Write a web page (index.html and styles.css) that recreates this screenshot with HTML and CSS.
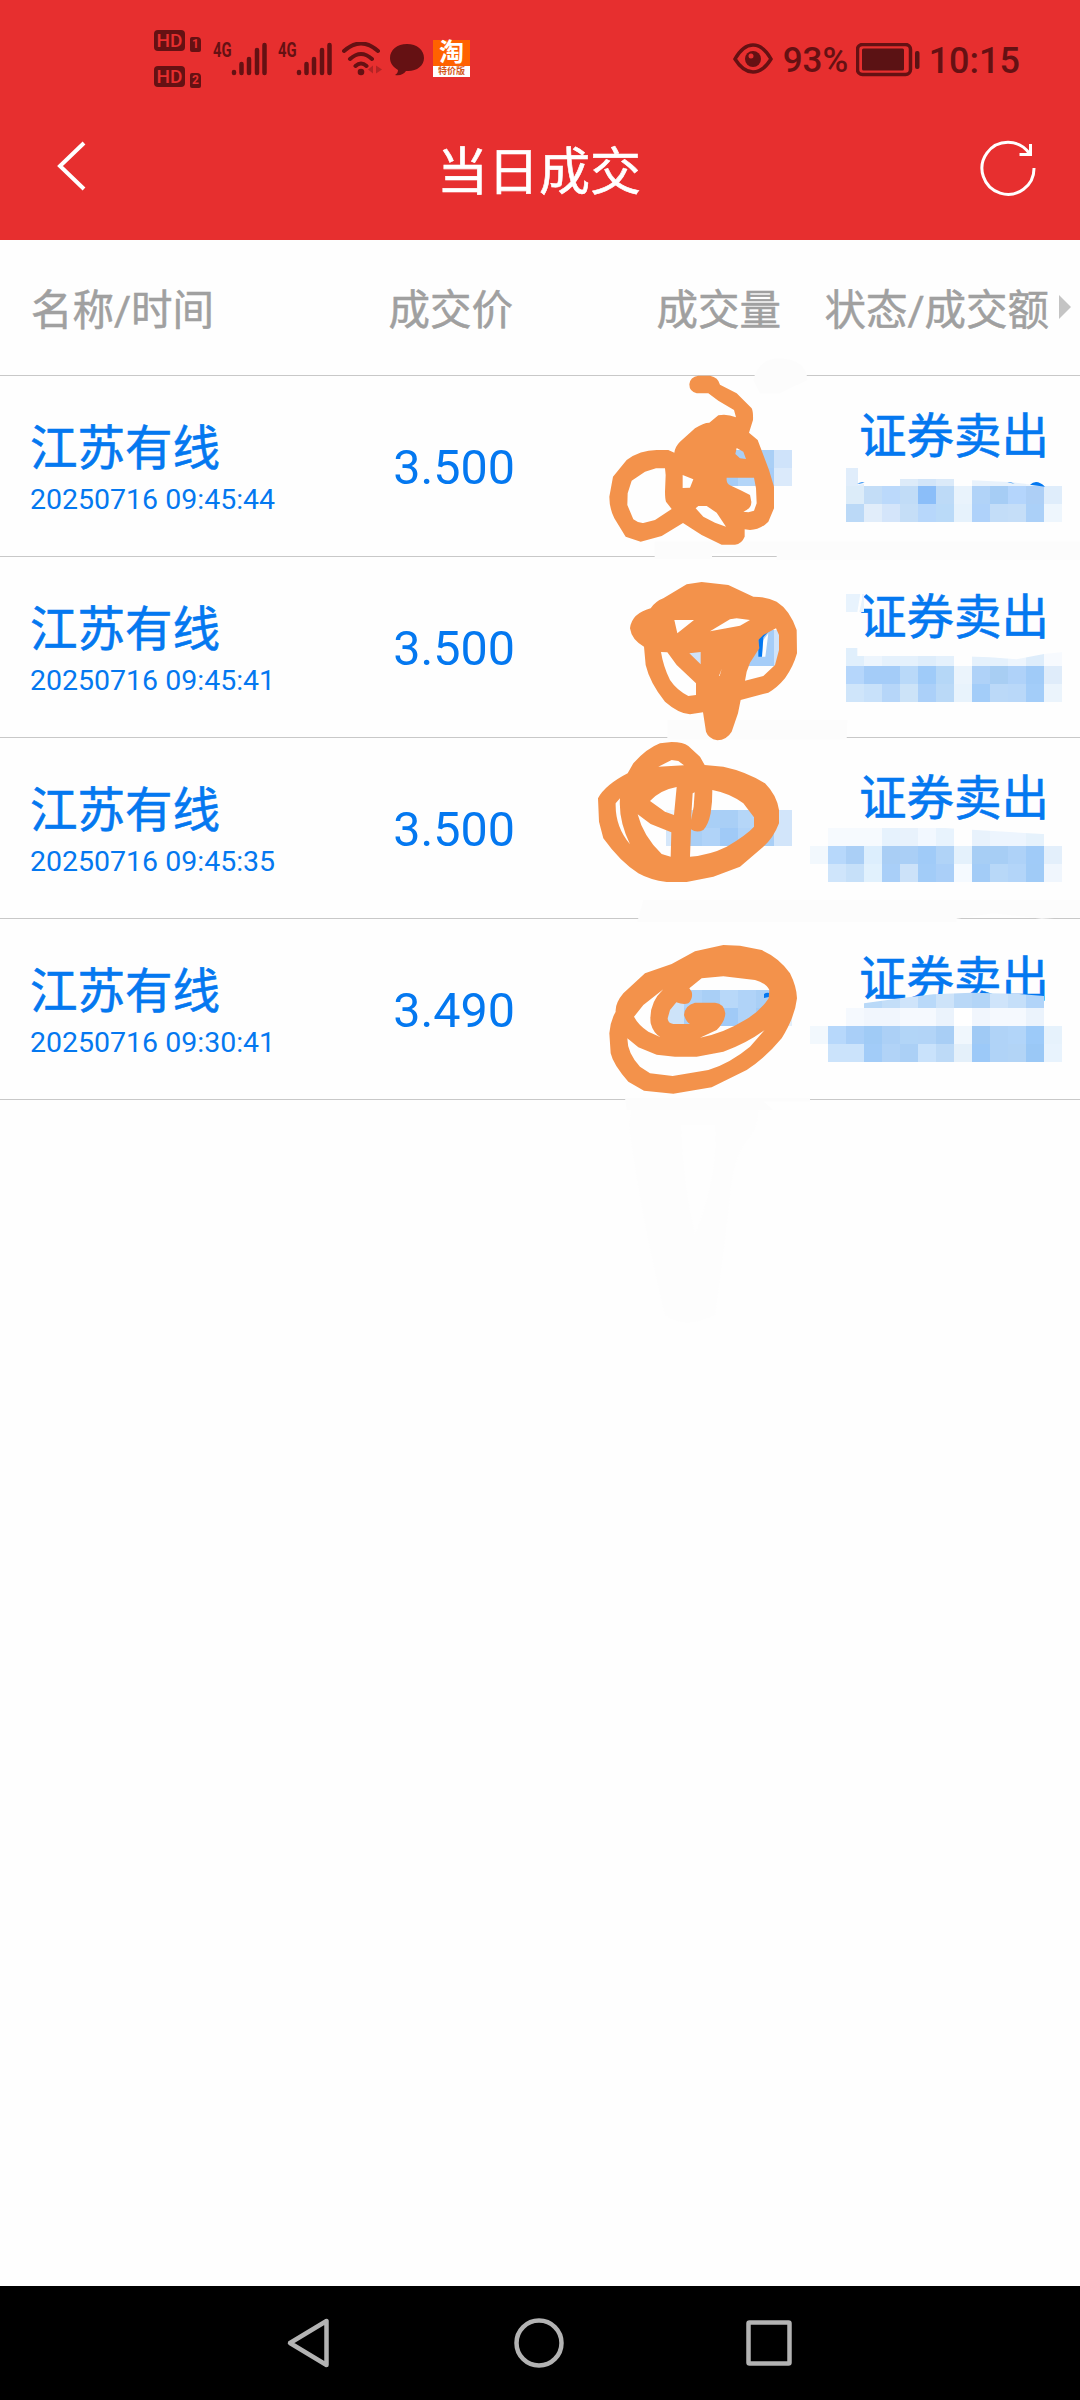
FILE: index.html
```html
<!DOCTYPE html>
<html lang="zh-CN">
<head>
    <meta charset="UTF-8">
    <meta name="viewport" content="width=device-width, initial-scale=1.0">
    <title>当日成交</title>
    <link rel="stylesheet" href="styles.css">
</head>
<body>
    <div class="phone">
        <div class="status-bar">
            <div class="status-left">
                <div class="hd-icons">
                    <div class="hd-line"><span class="hd">HD</span><span class="sim">1</span></div>
                    <div class="hd-line"><span class="hd">HD</span><span class="sim">2</span></div>
                </div>
                <div class="signal">
                    <span class="net">4G</span>
                    <svg width="36" height="34" viewBox="0 0 36 34"><path d="M3 31v-1M10.500 31v-9M18 31V17M26 31V8M33.500 31V3"/></svg>
                </div>
                <div class="signal">
                    <span class="net">4G</span>
                    <svg width="36" height="34" viewBox="0 0 36 34"><path d="M3 31v-1M10.500 31v-9M18 31V17M26 31V8M33.500 31V3"/></svg>
                </div>
                <svg class="wifi" width="40" height="34" viewBox="0 0 40 34">
                    <path d="M2 9q17-15 34 0M8 17q11-10 22 0M13.500 24q5.500-5 11 0"/>
                    <circle cx="19" cy="30" r="3.300"/>
                    <path class="wifi-data" d="M26 27.500l5-4v8zM40 27.500l-6-4v8z"/>
                </svg>
                <svg class="chat" width="34" height="32" viewBox="0 0 34 32">
                    <path d="M17 0C7 0 0 6 0 14c0 5 3 9 8 12 0 2-1 4-3 5 5 1 9-1 11-4 10 1 18-5 18-13S27 0 17 0z"/>
                </svg>
                <div class="taobao">
                    <span class="tao">淘</span>
                    <span class="tejia">特价版</span>
                </div>
            </div>
            <div class="status-right">
                <svg class="eye" width="40" height="32" viewBox="0 0 40 32">
                    <path d="M2 16Q10 2 20 2t18 14q-8 13-18 13T2 16z"/>
                    <circle cx="20" cy="16" r="8"/>
                    <circle class="eye-dot" cx="18" cy="13" r="2.500"/>
                </svg>
                <span class="percent">93%</span>
                <svg class="battery" width="64" height="34" viewBox="0 0 64 34">
                    <rect class="shell" x="1.500" y="1.500" width="53" height="30" rx="5"/>
                    <rect x="6" y="5.500" width="42" height="22" rx="1.500"/>
                    <rect x="59" y="8" width="4.500" height="18" rx="2"/>
                </svg>
                <span class="clock">10:15</span>
            </div>
        </div>

        <div class="title-bar">
            <svg class="back" width="30" height="50" viewBox="0 0 30 50"><path d="M27 2L3 25l24 23"/></svg>
            <h1>当日成交</h1>
            <svg class="refresh" width="56" height="56" viewBox="0 0 56 56">
                <path d="M54 28A26 26 0 1 1 49 13"/>
                <path d="M50.500 4v10.500H39.500"/>
            </svg>
        </div>

        <div class="table-head">
            <span>名称/时间</span>
            <span class="num">成交价</span>
            <span class="num">成交量</span>
            <span class="num">状态/成交额</span>
            <i class="more"></i>
        </div>
        <div class="trade-list" id="trade-list"></div>
        <svg class="smudge" width="140" height="230" viewBox="0 0 140 230">
            <path d="M8 0h122q8 15-4 35-15 15-20 50-5 50-16 130-30 15-50 0Q15 110 4 25z"/>
            <path class="gap" d="M56 25h34q4 50-20 110-12-50-14-110z"/>
        </svg>

        <div class="nav-bar">
            <svg width="46" height="60" viewBox="0 0 46 60"><path d="M40.500 8v44L4 30z"/></svg>
            <svg width="52" height="60" viewBox="0 0 52 60"><circle cx="26" cy="30" r="22.500"/></svg>
            <svg width="46" height="60" viewBox="0 0 46 60"><rect x="2.500" y="9.500" width="41" height="41" rx="1"/></svg>
        </div>
    </div>

    <script>
        // mosaic: [x, y, colours...] rows of 54-unit tiles, "-" leaves a tile out
        // the drawing area of a row uses 3 units per pixel
        const trades = [
            {
                name: '江苏有线', time: '20250716 09:45:44', price: '3.500', side: '证券卖出', top: 48,
                wipe: 'M520 60Q535-5 600-5 680 0 682 60L600 100H540zM224 545H1500V600H590V580H396V596H224z',
                mosaic: [
                    [420, 270, '#a9cff6', '#a9cff6', '#a9cff6', '#cfe3fa'],
                    [420, 324, '#a5ccf6', '#b3d5f8', '#a6cdf8', '#dbeafb'],
                    [798, 324, '#e0edfb', '-', '-', '#ddebf9', '#d2e5f9', '#dbeaf9', '-', '#e8f2fc', '#e8f2fc', '#e8f2fc', '#edf5fd'],
                    [798, 378, '#dcecf9', '#c3ddf7', '#bbd9fb', '#c1dcf7', '#8bbef9', '#bddaf7', '#e9f3fc', '#b1d3f8', '#a6cdf5', '#b4d5fc', '#adcff6', '#dfedfb'],
                    [798, 432, '#bbd9f7', '#e1edfa', '#d4e5fa', '#c5def7', '#b7d7fb', '#badaf8', '#e6f2fc', '#afd2fa', '#c3ddf8', '#c5def8', '#abd0f8', '#eef6fd']
                ],
                cover: 'M834 320H1443V378H1392L1300 367 1176 361 1122 357H960L834 374z',
                rest: 'M832 372q10-8 22-4zM1282 367q12-2 22 4zM1350 374q20-18 45 6z',
                doodle: 'M355 47L390 47Q415 52 420 74L470 100 515 145Q520 155 519 180L507 218 533 240 550 285 567 330 582 380V445L565 485Q540 510 510 510L494 508V530Q485 552 465 554H425L365 525 309 489 245 528 182 545 137 530 103 475Q88 445 88 410L99 350 140 300Q180 270 230 270H265L283 278Q285 260 300 245L345 205Q370 188 388 188L415 166Q440 160 468 172L462 150 415 122 385 100H350Q328 95 328 73 330 50 355 47zM255 325H228L195 335 155 362 143 400 142 435 160 478Q175 490 190 489L225 480 275 447 258 425Q255 415 255 395L257 345zM308 345L340 358 330 383 308 384zM347 445L355 438H380L410 458 438 500 405 488 370 470zM470 264L490 275 498 297 480 295 466 282zM440 353H522L528 385 530 430 522 452 505 457 490 455Q515 445 514 425L510 405 485 392 450 376Q438 370 440 353z'
            },
            {
                name: '江苏有线', time: '20250716 09:45:41', price: '3.500', side: '证券卖出', top: 21,
                wipe: 'M262 510H802L800 568H262z',
                mosaic: [
                    [312, 294, '#cfe3fa'],
                    [528, 240, '#a5cdf8', '#cfe3fa'],
                    [474, 294, '#a5cdf8', '#a5cdf8', '#cfe3fa'],
                    [798, 132, '#e8f3fd'],
                    [798, 294, '#e0effc', '#edf5fd', '#e5f1fc', '#e5f1fc', '#deedfb', '#e5f1fc', '-', '#e5f1fc', '#e5f1fc', '#edf5fd', '#deedfb', '#f7fafe'],
                    [798, 348, '#b5d6fb', '#a4ccf8', '#a4ccf8', '#b9d9f9', '#9fcbf9', '#b5d7f7', '#ebf4fc', '#afd2f8', '#a8cef3', '#afd2f9', '#a0cbf8', '#dfecfa'],
                    [798, 402, '#cfe5fa', '#c8e1fa', '#b6d6f9', '#cce3f8', '#abd0f9', '#bad9f7', '#e8f3fc', '#a3cdf9', '#bbd9f8', '#b9d8f9', '#a3cdf9', '#ebf4fc']
                ],
                cover: 'M832 290H1450V306L1392 312 1310 328 1230 322 1122 318H832zM841 132L832 186H838L846 150V130zM545 320L550 270 565 250 556 320z',
                rest: 'M535 320V262L547 250 566 244 550 262 546 320z',
                doodle: 'M365 96L445 105 520 140Q560 140 590 155 630 180 650 240L651 310Q640 350 615 385 590 415 565 428L482 450 474 490 455 545Q440 570 412 571 385 565 378 545L369 487 330 493Q295 490 255 455 210 400 197 345L192 290Q155 270 150 235 155 190 212 175 225 155 250 145L320 103zM283 210H342L292 250zM390 244L450 208 470 205 510 210 480 227zM243 306L262 307 290 345 348 400V435L325 438Q290 420 270 390 250 350 243 306zM328 310L362 306V343zM588 235L597 255V300L585 345 550 378 495 392 500 365 510 338 538 295 535 270 550 255zM417 378L425 356 419 378z'
            },
            {
                name: '江苏有线', time: '20250716 09:45:35', price: '3.500', side: '证券卖出', top: 24,
                wipe: 'M190 510H1500V562H1460L1385 566 1240 550 1130 566V575H172z',
                mosaic: [
                    [258, 240, '#edf5fd', '#c5dff9', '#a9cff6', '#a9cff6', '#b5d6f8', '#a9cff6', '#d2e5fa'],
                    [258, 294, '#d5e7fa', '#a9cff6', '#b0d3f8', '#a0caf7', '#b0d3f8', '#a9cff6', '#d2e5fa'],
                    [744, 294, '#f6fafe', '#f6fafe', '#f6fafe', '#e6f2fd', '#e8f2fc', '#f2f8ff', '#e8f3fd', '-', '#e8f2fc', '#edf5fe', '#edf5fe', '#e6f2fc'],
                    [690, 348, '#f2f8fd', '#b7d8fb', '#aacff6', '#dceefd', '#a9cef5', '#aacff6', '#a0cbf8', '#b0d3f7', '#e4f1fc', '#a7cef5', '#a7cef5', '#aed2f8', '#a0cbf8', '#e3effb'],
                    [744, 402, '#cfe5fb', '#c6e0f9', '#e1f1fd', '#a9cff8', '#cce2f9', '#a2ccf8', '#aacff8', '#f5faff', '#a3ccf7', '#b8d8f8', '#b3d5f9', '#a0cbf7', '#f0f6fd']
                ],
                cover: 'M1060 292L1400 292V313L1176 299z',
                rest: '',
                doodle: 'M275 36Q310 36 325 48L360 80 374 105 430 110Q500 125 555 160 590 195 597 240V280Q580 325 550 350L480 410 400 440 320 456H260Q210 450 175 430 120 395 70 325L57 275 54 205Q75 165 143 130L160 100Q200 55 240 40zM235 110L275 90 295 93 312 106zM290 171L282 255 255 245 210 213Q240 180 290 171zM344 187L341 230 333 270 338 190zM397 180Q450 190 490 220L522 262V290Q500 315 440 350 390 375 330 380L333 298Q350 310 370 300 385 285 392 250L396 215zM173 253L212 282 274 307 272 380 245 372Q190 320 173 253zM120 205Q115 270 150 343 105 290 107 220z'
            },
            {
                name: '江苏有线', time: '20250716 09:30:41', price: '3.490', side: '证券卖出', top: 27,
                wipe: 'M135 564H690V574H550L580 600H140z',
                mosaic: [
                    [258, 240, '#cde3f9', '#b0d3f8', '#a9cff6', '#b8d8f9', '#b0d3f8', '#a9cff6', '#ffffff'],
                    [258, 294, '#cde3f9', '#a9cff6', '#a9cff6', '#a0caf7', '#b0d3f8', '#9fcaf7', '#e3effb'],
                    [852, 240, '#b9d9f8', '#c3def8', '#cfe4fa', '#b9d9f9', '#cde3f9', '#b9d8f7', '#b3d5f7', '#cfe4fa', '#c5dff9', '#b1d4f9'],
                    [798, 294, '#f5f9fe', '#f1f6fd', '#f1f6fd', '#f5f9fe', '#f5f9fe', '#ebf3fc', '#ffffff', '#f1f6fd', '#f5f9fe', '#f5f9fe', '#ebf3fc'],
                    [690, 348, '#f2f8fd', '#b7d8fb', '#a9cff8', '#a0cbf6', '#acd0f6', '#b2d5f7', '#b2d4f7', '#a8cef5', '#f0f7fd', '#a0caf5', '#b0d3f7', '#b2d5f9', '#9ccaf9', '#e6f2fc'],
                    [744, 402, '#cbe3fb', '#cbe3fb', '#a2ccf8', '#b1d3f7', '#abd0f6', '#c9e2fb', '#bddaf7', '#e4f0fa', '#9cc9f8', '#b0d3f7', '#b2d4f6', '#9ac8f6', '#e8f3fd']
                ],
                clip: 'M690 286L852 280 960 265 1060 253 1176 248 1300 251 1392 258 1450 262V460H690zM240 230H640V350H240z',
                cover: '',
                rest: 'M552 252Q560 246 572 250L570 260 552 264z',
                doodle: 'M430 105L480 107 545 120Q600 145 630 190 650 230 651 265 645 320 605 385 560 440 500 480L395 532 280 551 192 542 145 515Q100 465 92 430L88 370Q90 335 107 305 105 280 130 250L195 190 275 162 345 124zM365 205L430 199 525 210Q560 220 568 240L566 265Q540 305 495 330 430 370 360 383L410 360Q435 335 436 310 432 280 405 278H345Q315 285 312 315 318 335 330 342H280Q263 340 263 325L270 300 289 277Q310 285 325 280 340 265 335 245L328 235zM250 238Q205 280 212 340 220 370 242 382L205 365Q175 345 162 320L190 285zM142 385L175 412 230 434 285 440H350L430 425Q500 400 554 360L510 410Q450 460 385 480L278 498 210 490 180 470Q142 430 142 385z'
            }
        ];

        function drawMosaic(rows) {
            let out = '';
            rows.forEach(([x, y, ...colors]) => {
                colors.forEach((color, i) => {
                    if (color === '-') return;
                    out += `<rect x="${x + i * 54}" y="${y}" width="54" height="54" fill="${color}"/>`;
                });
            });
            return out;
        }

        function renderTrades() {
            const list = document.getElementById('trade-list');
            trades.forEach((trade, index) => {
                const row = document.createElement('div');
                row.className = 'trade';
                const clip = trade.clip ? `<clipPath id="clip-${index}"><path d="${trade.clip}"/></clipPath>` : '';
                const clipAttr = trade.clip ? `clip-path="url(#clip-${index})"` : '';
                row.innerHTML = `
                    <div class="stock">
                        <div class="name">${trade.name}</div>
                        <div class="time">${trade.time}</div>
                    </div>
                    <div class="price">${trade.price}</div>
                    <div class="side">${trade.side}</div>
                    <svg class="marks" viewBox="0 ${trade.top} 1500 540">
                        ${clip}
                        <path class="wipe" d="${trade.wipe}"/>
                        <g shape-rendering="crispEdges" ${clipAttr}>${drawMosaic(trade.mosaic)}</g>
                        <path class="cover" d="${trade.cover}"/>
                        <path class="rest" d="${trade.rest}"/>
                        <path class="doodle" d="${trade.doodle}"/>
                    </svg>`;
                list.appendChild(row);
            });
        }

        renderTrades();
    </script>
</body>
</html>
```
FILE: styles.css
```css
body {
    margin: 0;
    background-color: #fefefe;
    font-family: Roboto, "Noto Sans CJK SC", sans-serif;
}
.phone {
    display: flex;
    flex-direction: column;
    width: 1080px;
    height: 2400px;
    overflow: hidden;
}
svg {
    display: block;
    flex-shrink: 0;
}
.status-bar {
    box-sizing: border-box;
    height: 110px;
    padding: 10px 60px 0 154px;
    display: flex;
    justify-content: space-between;
    background-color: #e72f2f;
    color: #651113;
}
.status-left, .status-right {
    display: flex;
    align-items: flex-start;
}
.hd-icons {
    display: flex;
    flex-direction: column;
    gap: 15px;
    margin-top: 20px;
}
.hd-line {
    display: flex;
    align-items: flex-end;
    gap: 5px;
    height: 21px;
}
.hd {
    width: 31px;
    height: 21px;
    border-radius: 4px;
    background-color: #651113;
    color: #e72f2f;
    font-size: 19px;
    font-weight: 500;
    line-height: 22px;
    text-align: center;
}
.sim {
    width: 11px;
    height: 15px;
    margin-bottom: -1px;
    border-radius: 2px 4px 2px 2px;
    background-color: #651113;
    color: #e72f2f;
    font-size: 12px;
    font-weight: 700;
    line-height: 15px;
    text-align: center;
}
.signal {
    display: flex;
    margin: 32px 0 0 12px;
    width: 53px;
}
.net {
    width: 18px;
    font-size: 20px;
    font-weight: 700;
    line-height: 16px;
    transform: scaleX(0.74);
    transform-origin: left;
}
.signal svg {
    fill: none;
    stroke: #651113;
    stroke-width: 4.5;
    stroke-linecap: round;
}
.wifi {
    margin: 32px 0 0 11px;
    fill: none;
    stroke: #651113;
    stroke-width: 4;
    stroke-linecap: round;
}
.wifi circle {
    fill: #651113;
    stroke: none;
}
.wifi .wifi-data {
    fill: #b32425;
    stroke: none;
}
.chat {
    margin: 34px 0 0 8px;
    fill: #651113;
}
.taobao {
    width: 37px;
    height: 37px;
    margin: 30px 0 0 9px;
    display: flex;
    flex-direction: column;
    background-color: #ff6200;
    text-align: center;
}
.tao {
    height: 26px;
    color: #fff;
    font-size: 25px;
    font-weight: 700;
    line-height: 26px;
}
.tejia {
    height: 11px;
    background-color: #fff;
    color: #d4591c;
    font-size: 9px;
    font-weight: 700;
    line-height: 11px;
}
.eye {
    margin: 33px 10px 0 0;
    fill: none;
    stroke: #651113;
    stroke-width: 3.5;
}
.eye circle {
    fill: #651113;
    stroke: none;
}
.eye .eye-dot {
    fill: #e72f2f;
}
.percent, .clock {
    margin-top: 30px;
    font-size: 36px;
    font-weight: 500;
    line-height: 42px;
    white-space: nowrap;
}
.percent {
    width: 65px;
    font-size: 35px;
}
.battery {
    margin: 33px 9px 0 8px;
    fill: #5b1214;
}
.battery .shell {
    fill: none;
    stroke: #651113;
    stroke-width: 3.5;
}
.title-bar {
    box-sizing: border-box;
    height: 130px;
    padding: 0 44px 0 57px;
    display: flex;
    justify-content: space-between;
    background-color: #e72f2f;
}
.title-bar h1 {
    margin: 26px 0 0 11px;
    color: #fff;
    font-size: 51px;
    font-weight: 400;
    line-height: 74px;
    -webkit-text-stroke: 0.6px;
}
.back, .refresh {
    fill: none;
    stroke: #fff;
    stroke-width: 4;
}
.back {
    margin-top: 31px;
}
.refresh {
    margin-top: 30px;
    stroke-width: 3;
}
.table-head {
    box-sizing: border-box;
    height: 136px;
    padding: 0 0 2px 31px;
    border-bottom: 1px solid #c8c8c8;
    display: grid;
    grid-template-columns: 190px 292px 268px 268px 31px;
    align-items: center;
    color: #a0a0a0;
    font-size: 41.5px;
    white-space: nowrap;
    -webkit-text-stroke: 0.5px;
}
.num {
    text-align: right;
}
.more {
    width: 0;
    height: 0;
    margin-left: 10px;
    border: 12px solid transparent;
    border-left-color: #c4c4c4;
    border-right: 0;
}
.trade {
    position: relative;
    box-sizing: border-box;
    height: 181px;
    padding-left: 30px;
    border-bottom: 1px solid #c8c8c8;
    display: grid;
    grid-template-columns: 290px 194px 536px;
    color: #0478f0;
    white-space: nowrap;
}
.name, .side {
    font-size: 47.5px;
    line-height: 68px;
    -webkit-text-stroke: 0.6px;
}
.name {
    margin-top: 39px;
}
.time {
    margin-top: -2px;
    font-size: 28.5px;
    line-height: 38px;
}
.price {
    margin: 64px -1px 0 0;
    font-size: 48.5px;
    line-height: 56px;
    text-align: right;
}
.side {
    margin: 27px 1px 0 0;
    text-align: right;
}
/* hand-drawn strokes and mosaic lie over the numbers */
.marks {
    position: absolute;
    top: 0;
    right: 0;
    width: 500px;
    height: 180px;
    overflow: visible;
}
.wipe {
    fill: #fcfcfc;
}
.cover {
    fill: #fefefe;
}
.rest {
    fill: #0478f0;
}
.doodle {
    fill: #f3924b;
    fill-rule: evenodd;
}
.smudge {
    margin-left: 625px;
    fill: #fdfdfd;
}
.smudge .gap {
    fill: #fefefe;
}
.nav-bar {
    box-sizing: border-box;
    height: 114px;
    margin-top: auto;
    padding: 0 288px 0 286px;
    display: flex;
    align-items: center;
    justify-content: space-between;
    background-color: #000;
}
.nav-bar svg {
    fill: none;
    stroke: #b3b3b3;
    stroke-width: 4.5;
    stroke-linejoin: round;
}
```
